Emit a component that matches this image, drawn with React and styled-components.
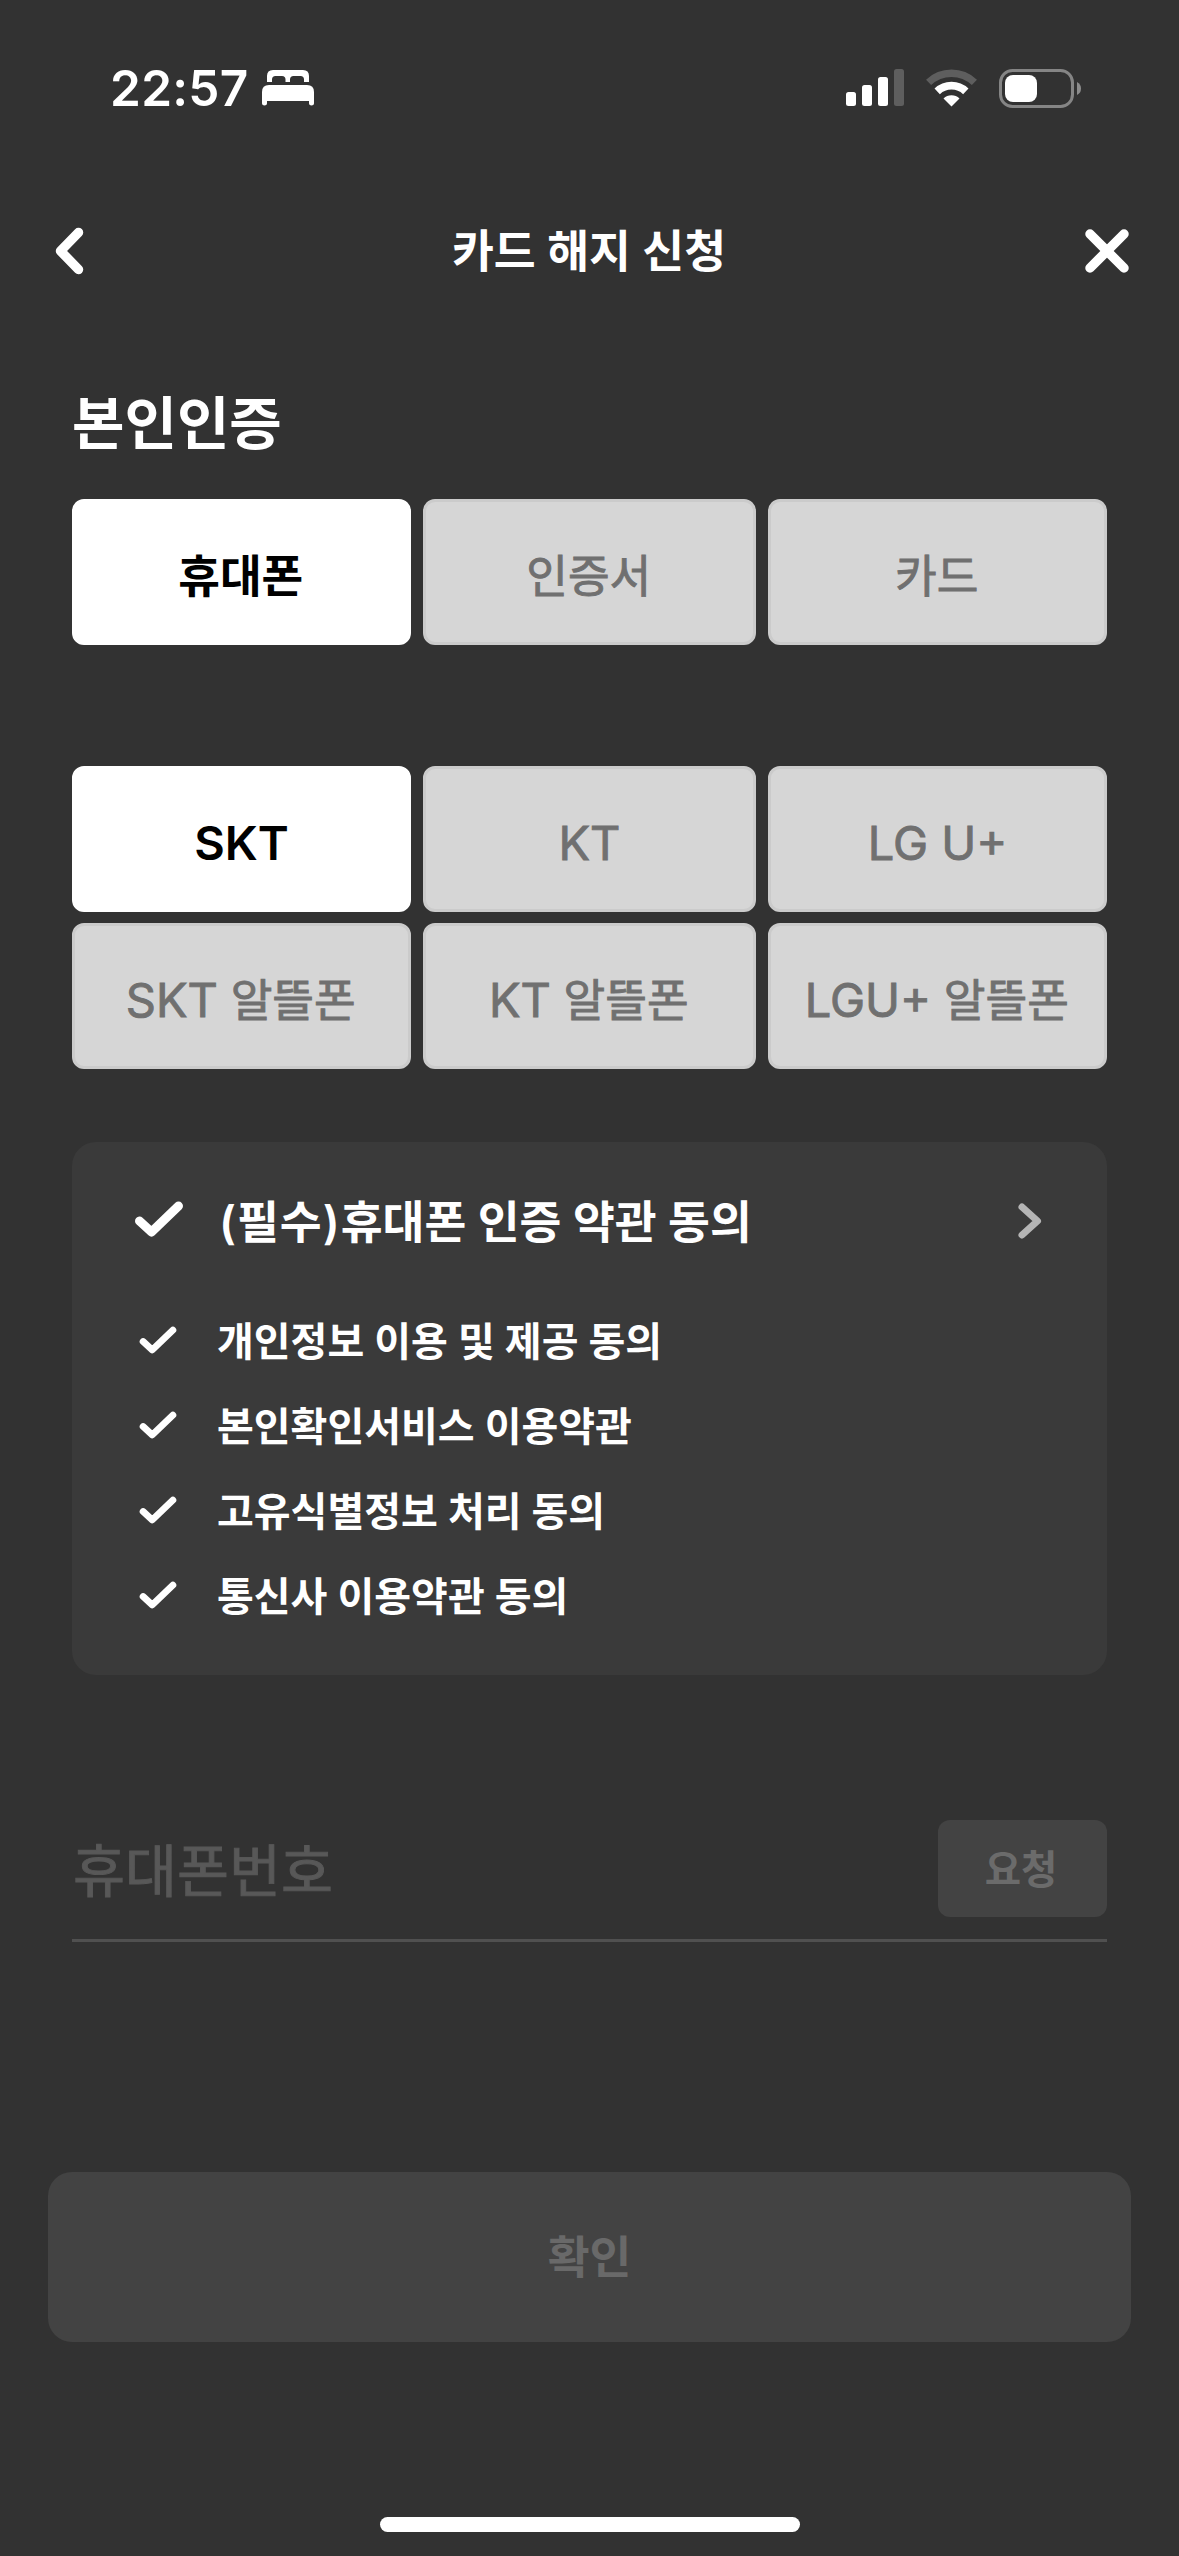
import { useState } from "react";
import styled, { createGlobalStyle } from "styled-components";

const GlobalStyle = createGlobalStyle`
  * {
    box-sizing: border-box;
  }
  body {
    margin: 0;
    background-color: #323232;
    color: #fff;
    font-family: Inter, "Noto Sans CJK KR", sans-serif;
  }
  button, input {
    font-family: inherit;
  }
`;

const Screen = styled.div`
  width: 1179px;
  height: 2556px;
  display: flex;
  flex-direction: column;
  overflow: hidden;
`;

const StatusBar = styled.div`
  height: 176px;
  flex: none;
  display: flex;
  justify-content: space-between;
  align-items: center;
  padding: 0 97px 0 110px;
  svg {
    display: block;
  }
`;

const StatusGroup = styled.div`
  display: flex;
  align-items: center;
  gap: ${(props) => props.$gap}px;
`;

const Time = styled.span`
  font-size: 49.5px;
  font-weight: 600;
  line-height: 60px;
  letter-spacing: 0.3px;
  width: 138px;
  white-space: nowrap;
`;

const Header = styled.header`
  height: 150px;
  flex: none;
  display: grid;
  grid-template-columns: 120px 1fr 120px;
  align-items: center;
  padding: 0 50px 0 49px;
`;

const IconButton = styled.button`
  display: flex;
  justify-content: ${(props) => (props.$end ? "flex-end" : "flex-start")};
  background: none;
  border: 0;
  padding: 0;
`;

const Title = styled.h1`
  margin: 0;
  padding-top: 2px;
  font-size: 45.5px;
  font-weight: 600;
  line-height: 60px;
  text-align: center;
`;

const Content = styled.main`
  padding: 58px 72px 0;
  display: flex;
  flex-direction: column;
`;

const SectionTitle = styled.h2`
  margin: 0 0 35px;
  font-size: 57px;
  font-weight: 600;
  line-height: 80px;
`;

const Tabs = styled.div`
  display: grid;
  grid-template-columns: 339px 333px 339px;
  gap: 11px 12px;
  margin-bottom: ${(props) => props.$bottom}px;
`;

const Tab = styled.button`
  height: 146px;
  padding: 9px ${(props) => (props.$korean ? 1.5 : 0)}px 0 0;
  border-radius: 12px;
  border: 3px solid ${(props) => (props.$active ? "#fff" : "#cbcbcb")};
  background-color: ${(props) => (props.$active ? "#fff" : "#d6d6d6")};
  color: ${(props) => (props.$active ? "#000" : "#707070")};
  font-size: 45.3px;
  font-weight: ${(props) => (props.$active ? 600 : 400)};
  line-height: 60px;
  white-space: nowrap;
  -webkit-text-stroke: ${(props) => (props.$active ? 0 : 0.9)}px currentColor;
`;

const Latin = styled.span`
  font-size: 47px;
  line-height: 1;
`;

const TermsBox = styled.section`
  height: 533px;
  border-radius: 24px;
  background-color: #3a3a3a;
  padding: 36px 62px 0 60px;
  margin-bottom: 145px;
`;

const TermsHead = styled.div`
  display: flex;
  align-items: center;
  height: 86px;
  margin-bottom: 35px;
`;

const HeadCheck = styled.span`
  margin-bottom: 4px;
  svg {
    display: block;
  }
`;

const TermsTitle = styled.strong`
  flex: 1;
  margin-left: 33px;
  padding-top: 3px;
  font-size: 45.5px;
  font-weight: 600;
  line-height: 60px;
`;

const Required = styled.span`
  letter-spacing: 1px;
`;

const TermsList = styled.ul`
  list-style: none;
  margin: 0;
  padding: 0;
`;

const TermsItem = styled.li`
  display: flex;
  align-items: center;
  height: 85px;
  font-size: 40px;
  font-weight: 600;
  line-height: 50px;
`;

const CheckCell = styled.span`
  width: 85px;
  padding-left: 5px;
  margin-bottom: 4px;
  svg {
    display: block;
  }
`;

const PhoneField = styled.div`
  display: flex;
  align-items: flex-start;
  justify-content: space-between;
  height: 122px;
  border-bottom: 3px solid #505050;
`;

const PhoneInput = styled.input`
  width: 760px;
  height: 97px;
  padding: 6px 0 0 1px;
  border: 0;
  outline: 0;
  background: none;
  color: #fff;
  font-size: 56.5px;
  &::placeholder {
    color: #585858;
    opacity: 1;
    -webkit-text-stroke: 0.9px #585858;
  }
`;

const RequestButton = styled.button`
  width: 169px;
  height: 97px;
  padding: 0 3px 5px 0;
  border: 0;
  border-radius: 12px;
  background-color: #434343;
  color: #6b6b6b;
  font-size: 39.5px;
  font-weight: 600;
`;

const ConfirmButton = styled.button`
  width: 1083px;
  height: 170px;
  flex: none;
  margin: 230px auto 0;
  padding: 0 0 7px;
  border: 0;
  border-radius: 24px;
  background-color: #434343;
  color: #696969;
  font-size: 45.5px;
  font-weight: 600;
`;

const HomeBar = styled.div`
  width: 420px;
  height: 15px;
  border-radius: 8px;
  background-color: #fff;
  margin: auto auto 24px;
`;

const methods = ["휴대폰", "인증서", "카드"];

const carriers = [
  { latin: "SKT" },
  { latin: "KT" },
  { latin: "LG U+" },
  { latin: "SKT", korean: "알뜰폰" },
  { latin: "KT", korean: "알뜰폰" },
  { latin: "LGU+", korean: "알뜰폰" },
];

const terms = [
  "개인정보 이용 및 제공 동의",
  "본인확인서비스 이용약관",
  "고유식별정보 처리 동의",
  "통신사 이용약관 동의",
];

function BedIcon() {
  return (
    <svg width="52" height="36" viewBox="0 0 52 36" fill="#fff">
      <path d="M5 12V6Q5 0 11 0H41Q47 0 47 6V12H42V9.500Q42 6 38.500 6H31.500Q28 6 28 9.500V12H23.500V9.500Q23.500 6 20 6H13.500Q10 6 10 9.500V12Z" />
      <path d="M0 22Q0 15 7 15H45Q52 15 52 22V33.500Q52 35.500 49.500 35.500Q47 35.500 47 33.500V31H5V33.500Q5 35.500 2.500 35.500Q0 35.500 0 33.500Z" />
    </svg>
  );
}

function SignalIcon() {
  return (
    <svg width="58" height="38" viewBox="0 0 58 38" fill="#fff">
      <rect x="0" y="23" width="10" height="14" rx="2.500" />
      <rect x="16" y="16" width="10" height="21" rx="2.500" />
      <rect x="32" y="8" width="10" height="29" rx="2.500" />
      <rect x="48" y="0" width="10" height="37" rx="2.500" fill="#5e5e5e" />
    </svg>
  );
}

function WifiIcon() {
  return (
    <svg width="51" height="38" viewBox="0 0 51 38" fill="none">
      <path d="M2.600 13.400A33.300 33.300 0 0 1 48.400 13.400" stroke="#5e5e5e" strokeWidth="7.400" />
      <path d="M11.200 22.400A20.800 20.800 0 0 1 39.800 22.400" stroke="#fff" strokeWidth="7.800" />
      <path d="M25.500 37.500L17.500 29.500A11.500 11.500 0 0 1 33.500 29.500Z" fill="#fff" />
    </svg>
  );
}

function BatteryIcon() {
  return (
    <svg width="83" height="39" viewBox="0 0 83 39" fill="none">
      <rect x="1.500" y="1.500" width="72" height="36" rx="12" stroke="#858585" strokeWidth="3" />
      <rect x="6" y="6" width="32" height="27" rx="8" fill="#fff" />
      <path d="M78 13Q82 15 82 19.500Q82 24 78 26Z" fill="#8c8c8c" />
    </svg>
  );
}

function BackIcon() {
  return (
    <svg width="40" height="48" viewBox="0 0 40 48" fill="none">
      <path d="M29.500 5.500L11.500 24L29.500 42.500" stroke="#fff" strokeWidth="9.500" strokeLinecap="round" strokeLinejoin="round" />
    </svg>
  );
}

function CloseIcon() {
  return (
    <svg width="44" height="44" viewBox="0 0 44 44" fill="none">
      <path d="M5 5L39 39M39 5L5 39" stroke="#fff" strokeWidth="9.500" strokeLinecap="round" />
    </svg>
  );
}

function CheckIcon({ width, height }) {
  return (
    <svg width={width} height={height} viewBox="0 0 54 42" fill="none">
      <path d="M7.500 23L19.500 34L46.500 8" stroke="#fff" strokeWidth="9" strokeLinecap="round" strokeLinejoin="round" />
    </svg>
  );
}

function NextIcon() {
  return (
    <svg width="30" height="38" viewBox="0 0 30 38" fill="none">
      <path d="M7 5L22.500 19L7 33" stroke="#b5b5b5" strokeWidth="7" strokeLinecap="round" strokeLinejoin="round" />
    </svg>
  );
}

export default function App() {
  const [method, setMethod] = useState(0);
  const [carrier, setCarrier] = useState(0);

  return (
    <>
      <GlobalStyle />
      <Screen>
        <StatusBar>
          <StatusGroup $gap={14}>
            <Time>22:57</Time>
            <BedIcon />
          </StatusGroup>
          <StatusGroup $gap={22}>
            <SignalIcon />
            <WifiIcon />
            <BatteryIcon />
          </StatusGroup>
        </StatusBar>
        <Header>
          <IconButton>
            <BackIcon />
          </IconButton>
          <Title>카드 해지 신청</Title>
          <IconButton $end>
            <CloseIcon />
          </IconButton>
        </Header>
        <Content>
          <SectionTitle>본인인증</SectionTitle>
          <Tabs $bottom={121}>
            {methods.map((name, i) => (
              <Tab key={name} $korean $active={method === i} onClick={() => setMethod(i)}>
                {name}
              </Tab>
            ))}
          </Tabs>
          <Tabs $bottom={73}>
            {carriers.map((item, i) => (
              <Tab key={i} $korean={!!item.korean} $active={carrier === i} onClick={() => setCarrier(i)}>
                <Latin>{item.latin}</Latin>
                {item.korean && ` ${item.korean}`}
              </Tab>
            ))}
          </Tabs>
          <TermsBox>
            <TermsHead>
              <HeadCheck>
                <CheckIcon width={54} height={42} />
              </HeadCheck>
              <TermsTitle>
                <Required>(필수)</Required>휴대폰 인증 약관 동의
              </TermsTitle>
              <NextIcon />
            </TermsHead>
            <TermsList>
              {terms.map((term) => (
                <TermsItem key={term}>
                  <CheckCell>
                    <CheckIcon width={42} height={32} />
                  </CheckCell>
                  {term}
                </TermsItem>
              ))}
            </TermsList>
          </TermsBox>
          <PhoneField>
            <PhoneInput type="tel" placeholder="휴대폰번호" />
            <RequestButton>요청</RequestButton>
          </PhoneField>
        </Content>
        <ConfirmButton>확인</ConfirmButton>
        <HomeBar />
      </Screen>
    </>
  );
}
